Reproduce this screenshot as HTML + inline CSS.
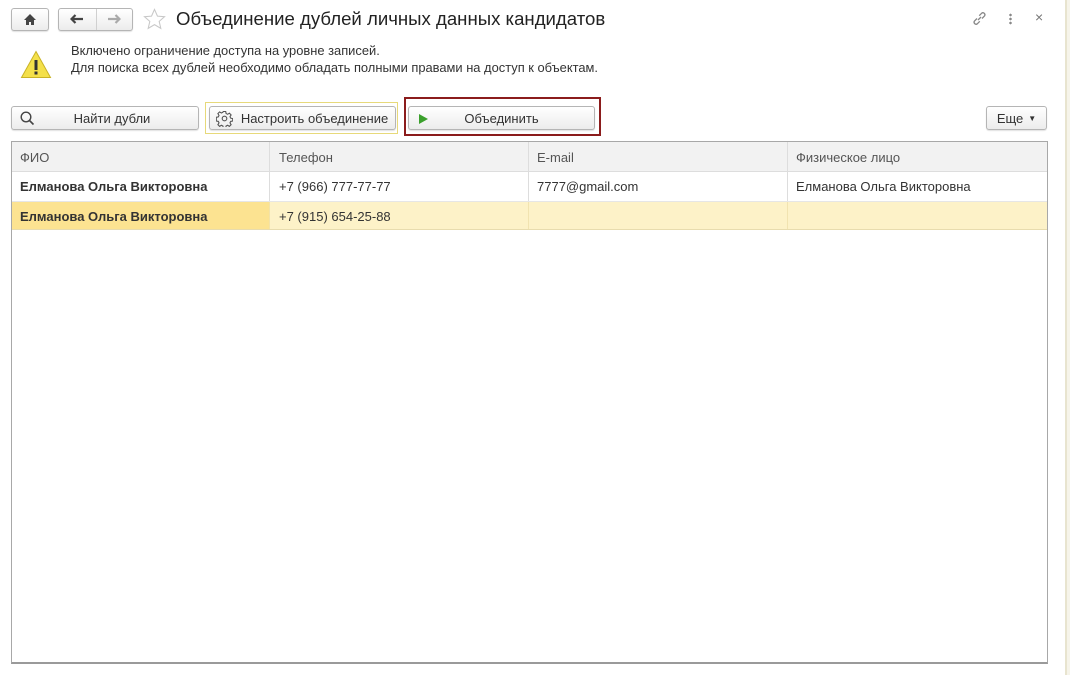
<!DOCTYPE html>
<html><head><meta charset="utf-8"><style>
*{box-sizing:border-box;margin:0;padding:0}
body{width:1070px;height:675px;background:#fff;font-family:"Liberation Sans",Arial,sans-serif;font-size:13px;color:#333;position:relative;overflow:hidden}
.abs{position:absolute}
.btn{position:absolute;border:1px solid #b5b5b5;border-radius:3px;background:linear-gradient(#fff,#ececec);box-shadow:0 1px 1px rgba(0,0,0,.12);font-size:13px;color:#333;display:flex;align-items:center;justify-content:center}
.th,.td{position:absolute;padding-left:8px;display:flex;align-items:center;white-space:nowrap}
</style></head><body>
<div class="abs" style="left:1065px;top:0;width:2px;height:675px;background:#e8e4cf"></div>
<div class="abs" style="left:1067px;top:0;width:3px;height:675px;background:#f6f4ea"></div>

<div class="btn" style="left:11px;top:8px;width:38px;height:23px">
<svg width="14" height="13" viewBox="0 0 14 13"><path d="M7 1L1 7h2v5h3V9h2v3h3V7h2z" fill="#444"/></svg></div>
<div class="btn" style="left:58px;top:8px;width:75px;height:23px;justify-content:flex-start">
<div style="width:37px;text-align:center"><svg width="14" height="10" viewBox="0 0 14 10"><path d="M1 5h12M5.5 1L1.5 5l4 4" stroke="#444" stroke-width="2.2" fill="none"/></svg></div>
<div style="width:1px;height:21px;background:#d0d0d0"></div>
<div style="width:36px;text-align:center"><svg width="14" height="10" viewBox="0 0 14 10"><path d="M1 5h12M8.5 1l4 4-4 4" stroke="#aaa" stroke-width="2.2" fill="none"/></svg></div></div>
<svg class="abs" style="left:143px;top:8px" width="23" height="22" viewBox="0 0 24 23"><path d="M12 1.5l3.1 7 7.4.6-5.6 4.9 1.7 7.3L12 17.4l-6.6 3.9 1.7-7.3L1.5 9.1l7.4-.6z" fill="none" stroke="#c8c8c8" stroke-width="1.1"/></svg>
<div class="abs" style="left:176px;top:8px;font-size:18.6px;color:#222">Объединение дублей личных данных кандидатов</div>

<svg class="abs" style="left:971px;top:10px" width="17" height="17" viewBox="0 0 17 17"><g fill="none" stroke="#888" stroke-width="1.3"><path d="M7 10l3-3"/><path d="M6 8.5L3.5 11a2 2 0 0 0 2.8 2.8L8.8 11.3"/><path d="M11 8.5L13.5 6a2 2 0 0 0-2.8-2.8L8.2 5.7"/></g></svg>
<div class="abs" style="left:1009px;top:13px;width:3px;height:12px;background:radial-gradient(circle,#888 1.2px,transparent 1.4px) 0 0/3px 4px"></div>
<div class="abs" style="left:1035px;top:9px;font-size:14px;color:#777">×</div>

<svg class="abs" style="left:20px;top:50px" width="32" height="29" viewBox="0 0 32 29"><path d="M16 1.5L30.5 27.5H1.5z" fill="#f4e04a" stroke="#c9b326" stroke-width="1"/><rect x="14.5" y="10" width="3" height="10" fill="#333"/><rect x="14.5" y="21.5" width="3" height="3" fill="#333"/></svg>
<div class="abs" style="left:71px;top:42px;font-size:12.9px;line-height:17px;color:#333">Включено ограничение доступа на уровне записей.<br>Для поиска всех дублей необходимо обладать полными правами на доступ к объектам.</div>

<div class="btn" style="left:11px;top:106px;width:188px;height:24px">
<svg class="abs" style="left:8px;top:4px" width="15" height="15" viewBox="0 0 15 15"><circle cx="6" cy="6" r="4.8" fill="none" stroke="#444" stroke-width="1.4"/><path d="M9.5 9.5l4 4" stroke="#444" stroke-width="1.6"/></svg>
<span style="margin-left:14px">Найти дубли</span></div>

<div class="abs" style="left:205px;top:102px;width:193px;height:32px;border:1px solid #e7d97a"></div>
<div class="btn" style="left:209px;top:106px;width:187px;height:24px">
<svg class="abs" style="left:6px;top:3px" width="17" height="17" viewBox="0 0 17 17"><g fill="none" stroke="#555" stroke-width="1.1"><circle cx="8.5" cy="8.5" r="2.3"/><path d="M7.3 1.5h2.4l.4 2 1.5.8 1.8-1.1 1.7 1.7-1.1 1.8.7 1.5 2 .4v2.4l-2 .4-.7 1.5 1.1 1.8-1.7 1.7-1.8-1.1-1.5.7-.4 2H7.3l-.4-2-1.5-.7-1.8 1.1-1.700-1.7 1.1-1.8-.7-1.5-2-.4V7.3l2-.4.7-1.5-1.1-1.8 1.7-1.7 1.8 1.1 1.5-.8z"/></g></svg>
<span style="margin-left:24px">Настроить объединение</span></div>

<div class="abs" style="left:404px;top:97px;width:197px;height:39px;border:2px solid #8b1c1c"></div>
<div class="btn" style="left:408px;top:106px;width:187px;height:24px">
<svg class="abs" style="left:10px;top:7px" width="9" height="10" viewBox="0 0 9 10"><path d="M0 0L9 5 0 10z" fill="#3ba02c"/></svg>
<span>Объединить</span></div>

<div class="btn" style="left:986px;top:106px;width:61px;height:24px">Еще <span style="font-size:8px;margin-left:5px">▼</span></div>

<div class="abs" style="left:11px;top:141px;width:1037px;height:523px;border:1px solid #a8a8a8;border-bottom:2px solid #9a9a9a"></div>
<div class="abs" style="left:12px;top:142px;width:1035px;height:30px;background:#f2f2f2;border-bottom:1px solid #ddd"></div>
<div class="abs" style="left:12px;top:201px;width:1035px;height:1px;background:#e6e6e6"></div>
<div class="abs" style="left:12px;top:202px;width:1035px;height:28px;background:#fdf2c8;border-bottom:1px solid #e8dcae"></div>
<div class="abs" style="left:12px;top:202px;width:257px;height:27px;background:#fce391"></div>

<div class="th" style="left:12px;top:142px;height:30px;color:#555">ФИО</div>
<div class="abs" style="left:269px;top:142px;width:1px;height:59px;background:#ddd"></div>
<div class="abs" style="left:269px;top:202px;width:1px;height:27px;background:#f3e3a8"></div>
<div class="th" style="left:271px;top:142px;height:30px;color:#555">Телефон</div>
<div class="abs" style="left:528px;top:142px;width:1px;height:59px;background:#ddd"></div>
<div class="abs" style="left:528px;top:202px;width:1px;height:27px;background:#f1e3b0"></div>
<div class="th" style="left:529px;top:142px;height:30px;color:#555">E-mail</div>
<div class="abs" style="left:787px;top:142px;width:1px;height:59px;background:#ddd"></div>
<div class="abs" style="left:787px;top:202px;width:1px;height:27px;background:#f1e3b0"></div>
<div class="th" style="left:788px;top:142px;height:30px;color:#555">Физическое лицо</div>

<div class="td" style="left:12px;top:172px;height:29px;font-weight:bold">Елманова Ольга Викторовна</div>
<div class="td" style="left:271px;top:172px;height:29px">+7 (966) 777-77-77</div>
<div class="td" style="left:529px;top:172px;height:29px">7777@gmail.com</div>
<div class="td" style="left:788px;top:172px;height:29px">Елманова Ольга Викторовна</div>

<div class="td" style="left:12px;top:202px;height:28px;font-weight:bold">Елманова Ольга Викторовна</div>
<div class="td" style="left:271px;top:202px;height:28px">+7 (915) 654-25-88</div>
</body></html>
